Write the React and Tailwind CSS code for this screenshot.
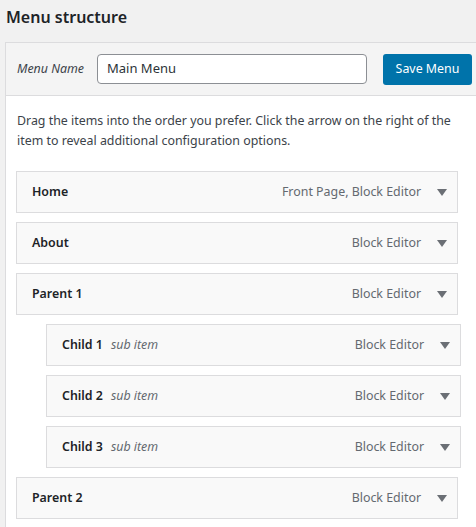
import React from "react";

const Tri = () => (
  <svg width="10" height="7" viewBox="0 0 10 7" className="shrink-0">
    <polygon points="0,0 10,0 5,7" fill="#6b6f75" />
  </svg>
);

function Item({ title, sub, right, child }) {
  return (
    <div
      className={
        "h-[42px] border border-[#dcdcde] bg-[#f9f9f9] flex items-center pl-[15px] pr-[10px] " +
        (child ? "ml-[30px] w-[415px]" : "w-[442px]")
      }
    >
      <span className="text-[12.4px] font-semibold text-[#1d2327]">{title}</span>
      {sub && <span className="ml-[8px] text-[12.4px] italic text-[#646970]">{sub}</span>}
      <span className="ml-auto text-[12.4px] text-[#646970]">{right}</span>
      <span className="ml-[16px] flex items-center"><Tri /></span>
    </div>
  );
}

export default function App() {
  return (
    <div className="w-[476px] h-[527px] overflow-hidden bg-[#f1f1f1] text-[#3c434a]" style={{ fontFamily: '"Noto Sans", "Open Sans", sans-serif' }}>
      <div className="h-[42px] pl-[6px] flex items-center pb-[8px]">
        <h3 className="text-[16px] font-semibold text-[#1d2327]">Menu structure</h3>
      </div>
      <div className="ml-[5px] w-[520px] border border-[#dcdcde] bg-white">
        <div className="h-[53px] bg-[#f4f4f4] border-b border-[#dcdcde] flex items-center pl-[11px]">
          <span className="text-[12.4px] italic text-[#3c434a] w-[80px]">Menu Name</span>
          <div className="w-[270px] h-[30px] rounded-[4px] border border-[#8c8f94] bg-white flex items-center pl-[9px] text-[13px] text-[#2c3338]">
            Main Menu
          </div>
          <button className="ml-[16px] w-[89px] h-[31px] rounded-[3px] bg-[#0073aa] text-white text-[12.4px]">
            Save Menu
          </button>
        </div>
        <div className="pl-[10px] pt-[15px] pb-[20px]">
          <p className="text-[12.4px] leading-[19.5px] text-[#3c434a] pl-[1px] whitespace-nowrap">
            Drag the items into the order you prefer. Click the arrow on the right of the
            <br />
            item to reveal additional configuration options.
          </p>
          <div className="mt-[21px] flex flex-col gap-[9px]">
            <Item title="Home" right="Front Page, Block Editor" />
            <Item title="About" right="Block Editor" />
            <Item title="Parent 1" right="Block Editor" />
            <Item title="Child 1" sub="sub item" right="Block Editor" child />
            <Item title="Child 2" sub="sub item" right="Block Editor" child />
            <Item title="Child 3" sub="sub item" right="Block Editor" child />
            <Item title="Parent 2" right="Block Editor" />
          </div>
        </div>
      </div>
    </div>
  );
}
